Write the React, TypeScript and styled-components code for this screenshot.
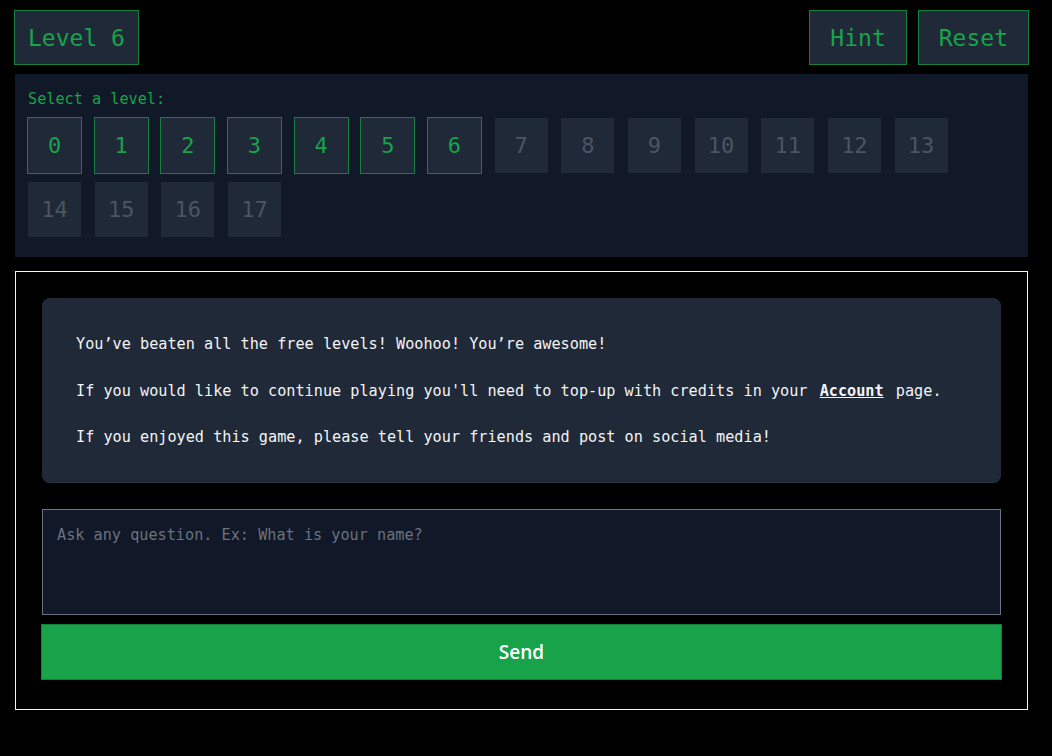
import React from "react";
import styled, { createGlobalStyle } from "styled-components";

const GlobalStyle = createGlobalStyle`
  html, body {
    margin: 0;
    padding: 0;
    background: #000;
  }
  body {
    font-family: "DejaVu Sans Mono", "Liberation Mono", monospace;
    color: #f3f4f6;
  }
`;

const Page = styled.div`
  width: 1015px;
  padding: 10px 0 0 14px;
  display: flex;
  flex-direction: column;
`;

const Header = styled.div`
  display: flex;
  justify-content: space-between;
  align-items: center;
`;

const Actions = styled.div`
  display: flex;
  gap: 11px;
`;

const HeadButton = styled.button<{ $pad: number }>`
  height: 55px;
  padding: 0 ${(p) => p.$pad}px;
  background: #1f2937;
  border: 1px solid #15803d;
  color: #16a34a;
  font-family: "DejaVu Sans Mono", monospace;
  font-size: 23px;
  cursor: pointer;
`;

const LevelPanel = styled.section`
  margin: 9px 1px 0;
  background: #111827;
  padding: 14px 12px 19px;
`;

const PanelLabel = styled.div`
  color: #16a34a;
  font-size: 15.2px;
  line-height: 23px;
  margin-bottom: 6px;
  padding-left: 1px;
`;

const TileGrid = styled.div`
  display: flex;
  flex-wrap: wrap;
  max-width: 960px;
  column-gap: 11.67px;
  row-gap: 7px;
`;

const Tile = styled.button<{ $open: boolean }>`
  width: 55px;
  height: 57px;
  padding: 0;
  background: #1f2937;
  background-clip: padding-box;
  border: 1px solid ${(p) => (p.$open ? "#15803d" : "transparent")};
  color: ${(p) => (p.$open ? "#16a34a" : "#4b5563")};
  font-family: "DejaVu Sans Mono", monospace;
  font-size: 22px;
  display: flex;
  align-items: center;
  justify-content: center;
  cursor: pointer;
`;

const ChatBox = styled.section`
  margin: 14px 1px 0;
  border: 1px solid #f3f4f6;
  padding: 26px 26px 29px;
  display: flex;
  flex-direction: column;
`;

const Message = styled.div`
  background: #1f2937;
  border-radius: 8px;
  height: 184px;
  box-sizing: border-box;
  padding: 34px;
  display: flex;
  flex-direction: column;
  gap: 22.5px;
  box-shadow: 0 1px 0 #2a3444;
`;

const Para = styled.p`
  margin: 0;
  font-size: 15.2px;
  line-height: 24px;
  color: #f3f4f6;
  white-space: nowrap;
`;

const AccountLink = styled.a`
  font-weight: bold;
  color: #f3f4f6;
  text-decoration: underline;
  margin: 0 3px;
`;

const Question = styled.textarea`
  margin-top: 27px;
  height: 106px;
  box-sizing: border-box;
  background: #111827;
  border: 1px solid #6b7280;
  border-radius: 0;
  padding: 13px 14px;
  color: #f3f4f6;
  font-family: "DejaVu Sans Mono", monospace;
  font-size: 15.2px;
  line-height: 24px;
  resize: none;
  outline: none;
  &::placeholder {
    color: #6b7280;
  }
`;

const SendButton = styled.button`
  margin: 9px -1px 0;
  height: 56px;
  background: #18a34a;
  border: 1px solid #15803d;
  color: #fff;
  font-family: "Open Sans", "Noto Sans", sans-serif;
  font-weight: 600;
  font-size: 19px;
  cursor: pointer;
`;

const levels = Array.from({ length: 18 }, (_, i) => i);

export default function App() {
  return (
    <>
      <GlobalStyle />
      <Page>
        <Header>
          <HeadButton $pad={13}>Level 6</HeadButton>
          <Actions>
            <HeadButton $pad={20}>Hint</HeadButton>
            <HeadButton $pad={20}>Reset</HeadButton>
          </Actions>
        </Header>
        <LevelPanel>
          <PanelLabel>Select a level:</PanelLabel>
          <TileGrid>
            {levels.map((n) => (
              <Tile key={n} $open={n <= 6}>
                {n}
              </Tile>
            ))}
          </TileGrid>
        </LevelPanel>
        <ChatBox>
          <Message>
            <Para>You’ve beaten all the free levels! Woohoo! You’re awesome!</Para>
            <Para>
              If you would like to continue playing you'll need to top-up with credits in your{" "}
              <AccountLink href="#">Account</AccountLink> page.
            </Para>
            <Para>If you enjoyed this game, please tell your friends and post on social media!</Para>
          </Message>
          <Question placeholder="Ask any question. Ex: What is your name?" />
          <SendButton>Send</SendButton>
        </ChatBox>
      </Page>
    </>
  );
}
